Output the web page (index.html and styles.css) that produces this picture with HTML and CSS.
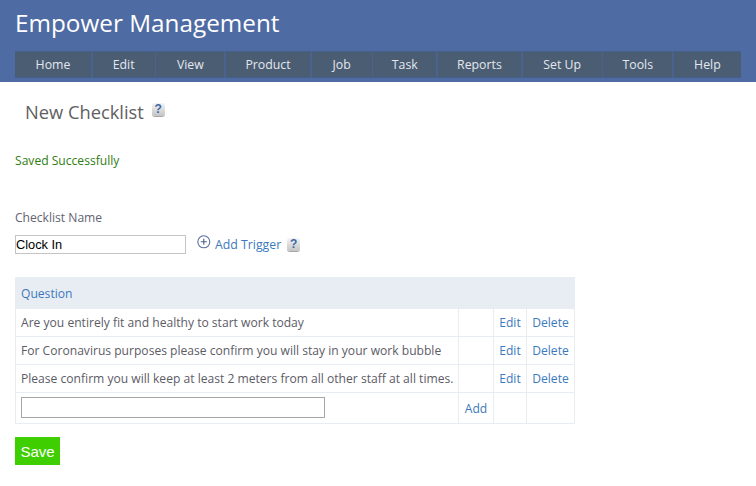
FILE: index.html
```html
<!DOCTYPE html>
<html lang="en">
<head>
<meta charset="utf-8">
<title>New Checklist</title>
<link rel="stylesheet" href="styles.css">
</head>
<body>
<header class="masthead">
  <div class="brand">Empower Management</div>
  <nav class="menu">
    <a>Home</a><a>Edit</a><a>View</a><a>Product</a><a>Job</a><a>Task</a><a>Reports</a><a>Set Up</a><a>Tools</a><a>Help</a>
  </nav>
</header>
<main class="content">
  <div class="title-row">
    <h1 class="title">New Checklist</h1>
    <span class="help">?</span>
  </div>
  <p class="saved">Saved Successfully</p>
  <label class="name-label" for="name">Checklist Name</label>
  <div class="name-row">
    <input class="name-input" id="name" type="text" value="Clock In">
    <svg class="plus" width="14" height="14" viewBox="0 0 14 14" aria-hidden="true">
      <circle cx="6.8" cy="6.8" r="6" fill="none" stroke="#5a6f9e" stroke-width="1.1"/>
      <path d="M6.8 3.8v6M3.8 6.8h6" stroke="#4a5f8e" stroke-width="1.1" fill="none"/>
    </svg>
    <a class="link trigger">Add Trigger</a>
    <span class="help">?</span>
  </div>
  <table class="grid">
    <colgroup>
      <col class="col-q"><col class="col-add"><col class="col-edit"><col class="col-del">
    </colgroup>
    <thead>
      <tr><th colspan="4"><a class="link">Question</a></th></tr>
    </thead>
    <tbody>
      <tr><td class="q">Are you entirely fit and healthy to start work today</td><td></td><td class="act"><a class="link">Edit</a></td><td class="act"><a class="link">Delete</a></td></tr>
      <tr><td class="q">For Coronavirus purposes please confirm you will stay in your work bubble</td><td></td><td class="act"><a class="link">Edit</a></td><td class="act"><a class="link">Delete</a></td></tr>
      <tr><td class="q">Please confirm you will keep at least 2 meters from all other staff at all times.</td><td></td><td class="act"><a class="link">Edit</a></td><td class="act"><a class="link">Delete</a></td></tr>
      <tr class="add-row"><td class="q"><input class="q-input" type="text"></td><td class="act"><a class="link">Add</a></td><td></td><td></td></tr>
    </tbody>
  </table>
  <button class="save" type="button">Save</button>
</main>
</body>
</html>
```
FILE: styles.css
```css
html, body {
  margin: 0;
  padding: 0;
  background: #fff;
}
body {
  font-family: "Open Sans", "Noto Sans", sans-serif;
  font-size: 12.1px;
  color: #5c5c66;
}
.masthead {
  background: #4f6ba3;
  height: 82px;
  padding: 0 15px;
  box-sizing: border-box;
}
.brand {
  color: #fff;
  font-size: 24.3px;
  line-height: 32px;
  padding-top: 7px;
  height: 51px;
  box-sizing: border-box;
}
.menu {
  display: grid;
  grid-template-columns: 76px 62px 68px 84px 60px 63px 83px 79px 69px 67px;
  justify-content: space-between;
  width: 726px;
  height: 27px;
  background: #4a628e;
}
.menu a {
  display: flex;
  align-items: center;
  justify-content: center;
  background: #4b5d73;
  color: #e4e8ee;
  font-size: 12.3px;
  border: 1px solid #465e8c;
  border-width: 1px 0;
}
.content {
  padding: 0 15px;
}
.title-row {
  display: flex;
  align-items: flex-start;
  padding: 18px 0 0 10px;
  height: 61px;
  box-sizing: border-box;
}
.title {
  margin: 0;
  font-size: 18.3px;
  line-height: 24px;
  font-weight: 400;
  color: #5f5f5f;
}
.title + .help {
  margin: 3px 0 0 8px;
}
.help {
  display: inline-block;
  width: 13px;
  height: 13px;
  border-radius: 3px;
  background: linear-gradient(#f4f4f4, #c4c4c4);
  box-shadow: 0 1px 0 #a8a8a8;
  color: #3c68a8;
  font: 700 12px/13px "Liberation Sans", sans-serif;
  text-align: center;
}
.saved {
  margin: 0;
  height: 65px;
  padding-top: 9px;
  box-sizing: border-box;
  line-height: 17px;
  color: #2f7d10;
}
.name-label {
  display: block;
  line-height: 17px;
  height: 27px;
  padding-top: 1px;
  box-sizing: border-box;
  color: #5f6372;
}
.name-row {
  display: flex;
  align-items: flex-start;
  height: 42px;
}
.name-input {
  width: 171px;
  height: 19px;
  margin: 0;
  padding: 0;
  box-sizing: border-box;
  border: 1px solid #c4c4c4;
  font: 12.8px "Liberation Sans", sans-serif;
  color: #000;
}
.plus {
  margin: 0 0 0 11px;
}
.link {
  color: #3c79bc;
}
.trigger {
  margin-left: 4px;
  font-size: 12.3px;
  line-height: 18px;
  padding-top: 1px;
}
.name-row .help {
  margin: 3px 0 0 6px;
}
.grid {
  border-collapse: collapse;
  table-layout: fixed;
  width: 559px;
}
.col-q { width: 443px; }
.col-add { width: 35px; }
.col-edit { width: 33px; }
.col-del { width: 48px; }
.grid th {
  background: #e8edf4;
  height: 30px;
  padding: 0 5px;
  text-align: left;
  font-weight: 400;
  border: 1px solid #e8edf4;
}
.grid td {
  border: 1px solid #e8edf4;
  height: 28px;
  box-sizing: border-box;
  padding: 0;
  line-height: 17px;
}
.grid .q {
  padding-left: 5px;
  white-space: nowrap;
}
.grid .act {
  text-align: center;
}
.grid .add-row td {
  height: 31px;
}
.q-input {
  display: block;
  width: 304px;
  height: 21px;
  margin: 0 0 2px;
  box-sizing: border-box;
  border: 1px solid #a6a6a6;
}
.save {
  display: block;
  margin-top: 13px;
  width: 45px;
  height: 28px;
  padding: 0;
  border: 0;
  background: #3fcf00;
  color: #fff;
  font: 15px "Liberation Sans", sans-serif;
}
```
